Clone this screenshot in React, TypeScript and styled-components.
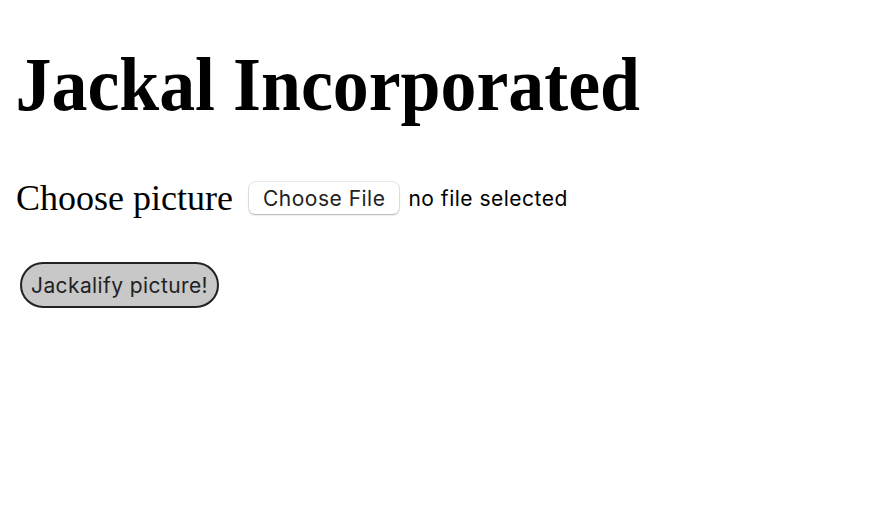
import React from "react";
import styled, { createGlobalStyle } from "styled-components";

const Global = createGlobalStyle`
  html, body { margin: 0; padding: 0; background: #fff; }
  body { padding: 8px; font-family: "Liberation Serif", serif; color: #000; }
`;

const Title = styled.h1`
  margin: 0;
  padding: 36px 0 0 8px;
  font-family: "Liberation Serif", serif;
  font-weight: bold;
  font-size: 76px;
  line-height: 80px;
  transform-origin: left center;
  transform: scaleX(0.945);
  white-space: nowrap;
`;

const Row = styled.div`
  display: flex;
  align-items: center;
  gap: 16px;
  padding: 53px 0 0 8px;
`;

const Label = styled.span`
  font-family: "Liberation Serif", serif;
  font-size: 36px;
`;

const FilePicker = styled.label`
  display: flex;
  align-items: center;
  gap: 9px;
  font-family: Inter, "Liberation Sans", sans-serif;
  font-size: 21px;
  letter-spacing: 0.5px;
  color: #000;
`;

const FileButton = styled.span`
  display: inline-flex;
  align-items: center;
  height: 32px;
  padding: 0 14px;
  box-sizing: border-box;
  background: #fff;
  border-radius: 6px;
  box-shadow: 0 0 0 0.5px rgba(0,0,0,0.15), 0 1px 2px rgba(0,0,0,0.25);
  color: #222;
`;

const HiddenInput = styled.input`
  display: none;
`;

const Action = styled.button`
  margin: 43px 0 0 12px;
  height: 46px;
  padding: 0 9px;
  border: 2px solid #222;
  border-radius: 23px;
  background: #c8c8c8;
  font-family: Inter, "Liberation Sans", sans-serif;
  font-size: 21px;
  letter-spacing: 0.4px;
  color: #222;
`;

export default function App() {
  return (
    <>
      <Global />
      <Title>Jackal Incorporated</Title>
      <Row>
        <Label>Choose picture</Label>
        <FilePicker>
          <HiddenInput type="file" />
          <FileButton>Choose File</FileButton>
          <span>no file selected</span>
        </FilePicker>
      </Row>
      <Action>Jackalify picture!</Action>
    </>
  );
}
